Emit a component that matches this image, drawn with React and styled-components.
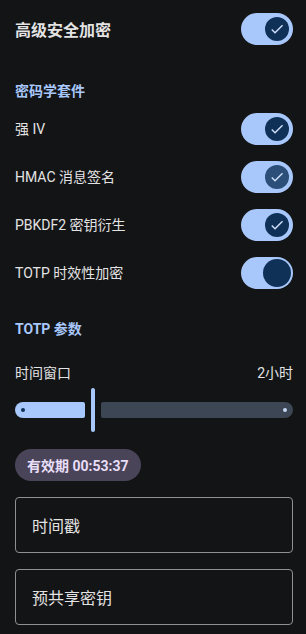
import React, { useState } from "react";
import styled, { createGlobalStyle } from "styled-components";

const GlobalStyle = createGlobalStyle`
  html, body {
    margin: 0;
    padding: 0;
    background: #131416;
  }
  body {
    font-family: Roboto, "Noto Sans CJK SC", sans-serif;
    color: #e3e3e3;
  }
`;

const suites = [
  { label: "强 IV", on: true, icon: true },
  { label: "HMAC 消息签名", on: true, icon: true, hover: true },
  { label: "PBKDF2 密钥衍生", on: true, icon: true },
  { label: "TOTP 时效性加密", on: true, icon: false, pressed: true }
];

const CheckIcon = () => (
  <svg width="16" height="16" viewBox="0 0 24 24">
    <path
      d="M9 16.2 4.8 12l-1.4 1.4L9 19 21 7l-1.4-1.4z"
      fill="#d3e3fd"
    />
  </svg>
);

const Switch = ({ on, icon, hover, pressed, onClick }) => (
  <Track $on={on} onClick={onClick}>
    {hover && <Halo />}
    <Thumb $hover={hover} $pressed={pressed} $on={on}>
      {icon && on && <CheckIcon />}
    </Thumb>
  </Track>
);

const App = () => {
  const [main, setMain] = useState(true);
  const [opts, setOpts] = useState(suites);

  const toggle = i => {
    setOpts(opts.map((o, j) => (j === i ? { ...o, on: !o.on } : o)));
  };

  return (
    <>
      <GlobalStyle />
      <Page>
        <Row $height={48}>
          <MainTitle>高级安全加密</MainTitle>
          <Switch on={main} icon onClick={() => setMain(!main)} />
        </Row>

        <SectionTitle $top={28}>密码学套件</SectionTitle>
        <List>
          {opts.map((o, i) => (
            <Row key={i} $height={48}>
              <Label>{o.label}</Label>
              <Switch {...o} onClick={() => toggle(i)} />
            </Row>
          ))}
        </List>

        <SectionTitle $top={22}>TOTP 参数</SectionTitle>
        <SliderHead>
          <Label>时间窗口</Label>
          <Label>2小时</Label>
        </SliderHead>
        <Slider>
          <ActiveTrack style={{ width: 70 }}>
            <Dot $color="#0f3158" />
          </ActiveTrack>
          <Handle />
          <InactiveTrack>
            <Dot $color="#c4d7f5" />
          </InactiveTrack>
        </Slider>

        <Chip>有效期 00:53:37</Chip>

        <Field>时间戳</Field>
        <Field>预共享密钥</Field>
      </Page>
    </>
  );
};

const Page = styled.div`
  display: flex;
  flex-direction: column;
  padding: 5px 13px 12px 15px;
`;

const Row = styled.div`
  display: flex;
  align-items: center;
  justify-content: space-between;
  height: ${p => p.$height}px;
`;

const List = styled.div`
  display: flex;
  flex-direction: column;
  margin-top: 4px;
`;

const MainTitle = styled.div`
  font-size: 16px;
  font-weight: 700;
  color: #e3e3e3;
`;

const SectionTitle = styled.div`
  margin-top: ${p => p.$top}px;
  font-size: 14px;
  line-height: 20px;
  font-weight: 700;
  color: #a8c7fa;
`;

const Label = styled.span`
  font-size: 14px;
  line-height: 20px;
  color: #e3e3e3;
`;

const Track = styled.div`
  position: relative;
  width: 52px;
  height: 32px;
  border-radius: 16px;
  background: ${p => (p.$on ? "#a8c7fa" : "#333537")};
  display: flex;
  align-items: center;
  justify-content: ${p => (p.$on ? "flex-end" : "flex-start")};
  padding: 0 4px;
  box-sizing: border-box;
  cursor: pointer;
  flex-shrink: 0;
`;

const Halo = styled.div`
  position: absolute;
  z-index: -1;
  right: -4px;
  top: -4px;
  width: 40px;
  height: 40px;
  border-radius: 50%;
  background: #1f2329;
`;

const Thumb = styled.div`
  position: relative;
  width: ${p => (p.$pressed ? 28 : 24)}px;
  height: ${p => (p.$pressed ? 28 : 24)}px;
  margin-right: ${p => (p.$pressed ? -2 : 0)}px;
  border-radius: 50%;
  background: ${p => (p.$hover ? "#2b4f78" : "#0f3158")};
  display: flex;
  align-items: center;
  justify-content: center;
`;

const SliderHead = styled.div`
  display: flex;
  justify-content: space-between;
  margin-top: 24px;
`;

const Slider = styled.div`
  display: flex;
  align-items: center;
  gap: 6px;
  height: 44px;
  margin-top: 5px;
`;

const ActiveTrack = styled.div`
  position: relative;
  height: 16px;
  background: #a8c7fa;
  border-radius: 8px 2px 2px 8px;
  display: flex;
  align-items: center;
  justify-content: flex-start;
  padding-left: 6px;
  box-sizing: border-box;
`;

const InactiveTrack = styled.div`
  flex: 1;
  height: 16px;
  background: #3d4654;
  border-radius: 2px 8px 8px 2px;
  display: flex;
  align-items: center;
  justify-content: flex-end;
  padding-right: 6px;
  box-sizing: border-box;
`;

const Dot = styled.span`
  width: 4px;
  height: 4px;
  border-radius: 50%;
  background: ${p => p.$color};
`;

const Handle = styled.div`
  width: 4px;
  height: 44px;
  border-radius: 2px;
  background: #a8c7fa;
`;

const Chip = styled.div`
  align-self: flex-start;
  margin-top: 17px;
  height: 32px;
  padding: 0 12px;
  border-radius: 16px;
  background: #4a4458;
  color: #e8def8;
  font-size: 14px;
  font-weight: 700;
  display: flex;
  align-items: center;
`;

const Field = styled.div`
  margin-top: 16px;
  height: 56px;
  border: 1px solid #8e918f;
  border-radius: 4px;
  box-sizing: border-box;
  padding: 0 16px;
  display: flex;
  align-items: center;
  font-size: 16px;
  color: #e3e3e3;
`;

export default App;
